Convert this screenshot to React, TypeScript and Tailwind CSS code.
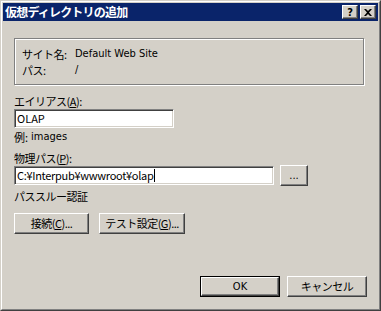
import type { ReactNode } from "react";

const jp = "font-['Noto_Sans_CJK_JP',sans-serif]";
const latin = "font-['DejaVu_Sans_Condensed','Liberation_Sans',sans-serif]";

function RaisedButton({
  children,
  className = "",
  isDefault = false,
}: {
  children: ReactNode;
  className?: string;
  isDefault?: boolean;
}) {
  const face = (
    <div className="flex h-full w-full items-center justify-center border border-t-white border-l-white border-r-[#404040] border-b-[#404040] bg-[#d4d0c8] shadow-[inset_-1px_-1px_0_#808080] text-[11px] leading-none text-black">
      {children}
    </div>
  );
  if (isDefault) {
    return <div className={`border border-black ${className}`}>{face}</div>;
  }
  return <div className={className}>{face}</div>;
}

function Sunken({ className = "", children }: { className?: string; children?: ReactNode }) {
  return (
    <div
      className={`flex items-center border border-t-[#808080] border-l-[#808080] border-r-white border-b-white bg-white pl-[2px] shadow-[inset_1px_1px_0_#404040,inset_-1px_-1px_0_#d4d0c8] ${className}`}
    >
      {children}
    </div>
  );
}

function Label({ children, className = "" }: { children: ReactNode; className?: string }) {
  return <div className={`${jp} h-[14px] text-[11px] leading-[14px] tracking-[-0.5px] text-black ${className}`}>{children}</div>;
}

export default function App() {
  return (
    <div className="h-[311px] w-[381px] border border-t-[#d4d0c8] border-l-[#d4d0c8] border-r-[#404040] border-b-[#404040] bg-[#d4d0c8]">
      <div className="flex h-full flex-col border border-t-white border-l-white border-r-[#808080] border-b-[#808080] p-px">
        {/* title bar */}
        <div className="flex h-[18px] items-center bg-[#0a246a] pl-[2px] pr-[2px]">
          <div className={`${jp} flex-1 text-[12px] font-bold leading-none tracking-[-0.8px] text-white`}>
            仮想ディレクトリの追加
          </div>
          <div className="flex gap-[2px]">
            <RaisedButton className="h-[14px] w-[16px]">
              <span className={`${latin} text-[11px] font-bold`}>?</span>
            </RaisedButton>
            <RaisedButton className="h-[14px] w-[16px]">
              <svg width="8" height="7" viewBox="0 0 8 7">
                <path d="M0 0h2l2 2l2 -2h2l-3 3.5l3 3.5h-2l-2 -2l-2 2h-2l3 -3.5z" fill="#000" />
              </svg>
            </RaisedButton>
          </div>
        </div>

        {/* body */}
        <div className="flex flex-1 flex-col px-[11px] pb-[11px]">
          <div className="mt-[17px] flex h-[47px] w-[350px] flex-col gap-[2px] border border-[#808080] pl-[7px] pt-[8px] shadow-[inset_1px_1px_0_#fff,1px_1px_0_#fff]">
            <div className="flex">
              <Label className="w-[53px]">サイト名:</Label>
              <div className={`${latin} text-[11px] leading-[14px]`}>Default Web Site</div>
            </div>
            <div className="flex">
              <Label className="w-[53px]">パス:</Label>
              <div className={`${latin} text-[11px] leading-[14px]`}>/</div>
            </div>
          </div>

          <Label className="mt-[9px]">
            エイリアス(<span className="underline">A</span>):
          </Label>
          <Sunken className="mt-[1px] h-[19px] w-[160px]">
            <span className={`${jp} text-[11px] leading-none`}>OLAP</span>
          </Sunken>

          <div className="mt-[2px] flex h-[14px] items-center text-[11px] leading-[14px]">
            <span className={jp}>例:</span>
            <span className={`${latin} ml-[3px]`}>images</span>
          </div>

          <Label className="mt-[7px]">
            物理パス(<span className="underline">P</span>):
          </Label>
          <div className="flex h-[21px] items-center">
            <Sunken className="h-[19px] w-[260px]">
              <span className={`${jp} text-[11px] leading-none tracking-[-0.3px]`}>C:¥Interpub¥wwwroot¥olap</span>
              <span className="ml-px h-[13px] w-px bg-black" />
            </Sunken>
            <RaisedButton className="ml-[6px] h-[21px] w-[28px]">
              <span className={latin}>...</span>
            </RaisedButton>
          </div>

          <Label className="mt-[3px]">パススルー認証</Label>

          <div className="mt-[10px] flex gap-[10px]">
            <RaisedButton className="h-[21px] w-[75px]">
              <span className={`${jp} tracking-[-0.5px]`}>
                接続(<span className="underline">C</span>)...
              </span>
            </RaisedButton>
            <RaisedButton className="h-[21px] w-[86px]">
              <span className={`${jp} tracking-[-0.5px]`}>
                テスト設定(<span className="underline">G</span>)...
              </span>
            </RaisedButton>
          </div>

          <div className="mt-auto flex justify-end gap-[7px]">
            <RaisedButton isDefault className="h-[21px] w-[80px]">
              <span className={latin}>OK</span>
            </RaisedButton>
            <RaisedButton className="h-[21px] w-[80px]">
              <span className={`${jp} tracking-[-0.5px]`}>キャンセル</span>
            </RaisedButton>
          </div>
        </div>
      </div>
    </div>
  );
}
